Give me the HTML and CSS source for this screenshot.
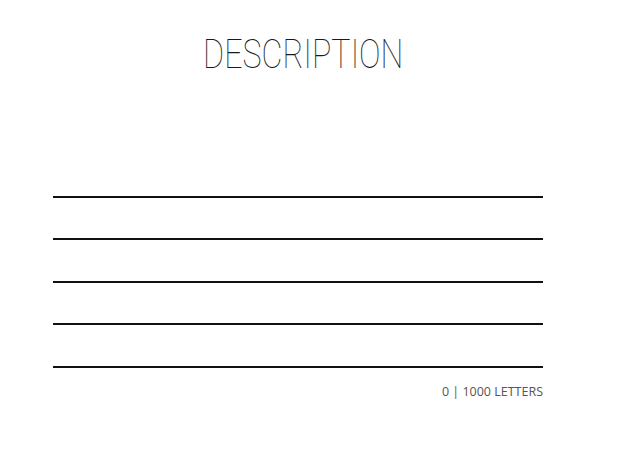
FILE: index.html
```html
<!DOCTYPE html>
<html>
<head>
<meta charset="utf-8">
<link rel="stylesheet" href="styles.css">
</head>
<body>
<div class="page">
  <h1 class="title"><span class="title-text">DESCRIPTION</span></h1>
  <div class="lines">
    <div class="line"></div>
    <div class="line"></div>
    <div class="line"></div>
    <div class="line"></div>
    <div class="line"></div>
  </div>
  <div class="counter">0 | 1000 LETTERS</div>
</div>
</body>
</html>
```
FILE: styles.css
```css
html, body {
  margin: 0;
  padding: 0;
  background: #ffffff;
}
.page {
  width: 490px;
  padding: 31px 0 0 53px;
  font-family: "Open Sans", "Liberation Sans", sans-serif;
}
.title {
  margin: 0;
  padding-left: 10px;
  text-align: center;
  font-family: Roboto, "Open Sans", sans-serif;
  font-weight: 100;
  font-size: 40px;
  line-height: 48px;
  color: #1a1a1a;
  -webkit-font-smoothing: antialiased;
}
.title-text {
  display: inline-block;
  transform: scaleX(0.806);
}
.lines {
  margin-top: 76px;
}
.line {
  height: 40.6px;
  border-bottom: 2px solid #111;
}
.counter {
  margin-top: 16px;
  text-align: right;
  font-size: 12.5px;
  font-weight: 400;
  line-height: 16px;
  color: #555;
}
```
